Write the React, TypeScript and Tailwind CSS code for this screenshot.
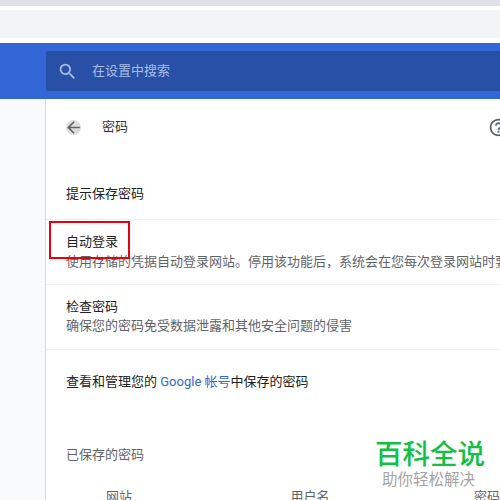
const cjk = "font-['Roboto','Noto_Sans_CJK_SC',sans-serif]"

function Divider() {
  return <div className="h-px bg-[#eeeeee]" />
}

export default function App() {
  return (
    <div className={`relative flex h-[500px] w-[500px] flex-col overflow-hidden bg-white ${cjk}`}>
      <div className="h-1.5 shrink-0 bg-[#dee1e6]" />
      <div className="mt-1 h-7 shrink-0 bg-[#f1f3f4]" />
      <header className="mt-[5px] flex h-14 shrink-0 items-center bg-[#3367d6] pl-[46px]">
        <div className="flex h-10 w-full items-center rounded-l-[2px] bg-[#2850a6] pl-[11px] text-[13px] text-[#a9bde6]">
          <svg viewBox="0 0 24 24" className="h-[21px] w-[21px]" fill="currentColor">
            <path d="M15.5 14h-.79l-.28-.27A6.47 6.47 0 0 0 16 9.5 6.5 6.5 0 1 0 9.5 16c1.61 0 3.09-.59 4.23-1.57l.27.28v.79l5 4.99L20.49 19l-4.99-5zm-6 0C7.01 14 5 11.99 5 9.5S7.01 5 9.5 5 14 7.01 14 9.5 11.99 14 9.5 14z" />
          </svg>
          <span className="ml-[14px]">在设置中搜索</span>
        </div>
      </header>

      <div className="flex min-h-0 flex-1">
        <aside className="w-[45px] shrink-0 bg-[#f8f9fa]" />
        <main className="min-w-0 flex-1 overflow-hidden border-l border-[#d9d9d9] whitespace-nowrap">
          <div className="flex h-[56px] items-center pl-5">
            <span className="flex h-[15px] w-[15px] items-center justify-center rounded-full bg-[#dedede] text-[#5f6368]">
              <svg viewBox="0 0 24 24" className="h-[19px] w-[19px] shrink-0" fill="currentColor">
                <path d="M20 11H7.83l5.59-5.59L12 4l-8 8 8 8 1.41-1.41L7.83 13H20v-2z" />
              </svg>
            </span>
            <span className="ml-[21px] text-[13px] text-[#333333]">密码</span>
            <svg viewBox="0 0 24 24" className="ml-auto mr-[-9px] h-[21px] w-[21px] shrink-0 text-[#5f6368]" fill="currentColor">
              <path d="M11 18h2v-2h-2v2zm1-16C6.48 2 2 6.48 2 12s4.48 10 10 10 10-4.48 10-10S17.52 2 12 2zm0 18c-4.41 0-8-3.59-8-8s3.59-8 8-8 8 3.59 8 8-3.59 8-8 8zm0-14c-2.21 0-4 1.79-4 4h2c0-1.1.9-2 2-2s2 .9 2 2c0 2-3 1.75-3 5h2c0-2.25 3-2.5 3-5 0-2.21-1.79-4-4-4z" />
            </svg>
          </div>

          <div className="flex h-[64px] items-center pl-5 pt-[14px] text-[13px] text-[#202124]">提示保存密码</div>
          <Divider />

          <div className="h-16 pl-5 pt-[13px]">
            <div className="text-[13px] leading-[17px] text-[#202124]">自动登录</div>
            <div className="mt-[3px] text-[13px] leading-[17px] text-[#5f6368]">
              使用存储的凭据自动登录网站。停用该功能后，系统会在您每次登录网站时要求您提供验证信息。
            </div>
          </div>
          <Divider />

          <div className="h-16 pl-5 pt-[13px]">
            <div className="text-[13px] leading-[17px] text-[#202124]">检查密码</div>
            <div className="mt-[2px] text-[13px] leading-[17px] text-[#5f6368]">
              确保您的密码免受数据泄露和其他安全问题的侵害
            </div>
          </div>
          <Divider />

          <div className="flex h-[62px] items-center pl-5 pt-[1px] text-[13px] text-[#202124]">
            查看和管理您的&nbsp;<span className="text-[#3367d6]">Google 帐号</span>中保存的密码
          </div>

          <div className="mt-[34px] pl-5 text-[13px] leading-[17px] text-[#5f6368]">已保存的密码</div>

          <div className="mt-[25px] flex text-[13px] leading-[17px] text-[#5f6368]">
            <span className="ml-[60px] w-[186px]">网站</span>
            <span className="w-[185px]">用户名</span>
            <span>密码</span>
          </div>
        </main>
      </div>

      {/* annotation + watermark lie on top of the page */}
      <div className="absolute left-[49px] top-[221px] h-[38px] w-[81px] border-2 border-[#e8000d]" />
      <div className="absolute left-[375px] top-[438px] w-[110px] text-center">
        <div className="text-[27.5px] leading-[34px] font-medium text-[#0fc243]">百科全说</div>
        <div className="mt-[-1px] pr-[3px] text-[15.5px] leading-[18px] text-[#a3a3a3]">助你轻松解决</div>
      </div>
    </div>
  )
}
